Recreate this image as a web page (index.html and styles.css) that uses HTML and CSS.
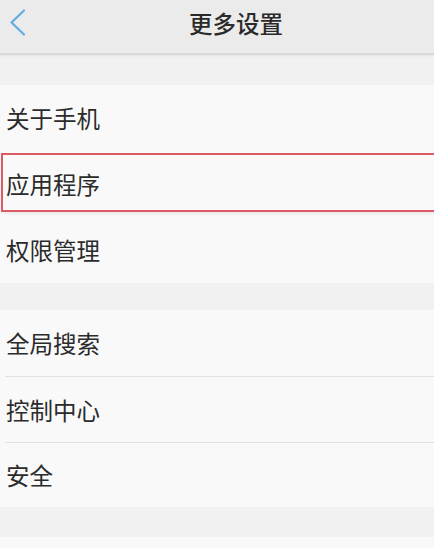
FILE: index.html
```html
<!DOCTYPE html>
<html lang="zh-CN">
<head>
    <meta charset="UTF-8">
    <title>更多设置</title>
    <link rel="stylesheet" href="styles.css">
</head>
<body>
    <div class="header">
        <a class="back" href="#">
            <svg width="20" height="30" viewBox="0 0 20 30"><path d="M15 2.5 L2.5 14.5 L15 26.5" fill="none" stroke="#62ace2" stroke-width="2.2" stroke-linecap="round" stroke-linejoin="round"/></svg>
        </a>
        <h1>更多设置</h1>
    </div>

    <div class="gap"></div>
    <div class="group">
        <div class="row">关于手机</div>
        <div class="row marked">应用程序</div>
        <div class="row">权限管理</div>
    </div>

    <div class="gap short"></div>
    <div class="group lined">
        <div class="row">全局搜索</div>
        <div class="row">控制中心</div>
        <div class="row">安全</div>
    </div>

    <div class="gap"></div>
    <div class="group">
        <div class="row tail"></div>
    </div>
</body>
</html>
```

FILE: styles.css
```css
html, body { height: 548px; overflow: hidden; }
body { margin: 0; background-color: #f1f1f1; font-family: "Noto Sans CJK SC", "Noto Sans", sans-serif; color: #2b2b2b; }
.header {
    height: 53px; display: flex; align-items: center;
    background-color: #ebebeb;
    border-bottom: 2px solid #d9d9d9;
    box-shadow: 0 1px 2px rgba(0,0,0,0.06);
    position: relative;
}
.back { display: flex; padding-left: 9px; margin-top: -8px; }
.header h1 {
    position: absolute; left: 38px; right: 0; top: 0; margin: 0;
    line-height: 46px; text-align: center;
    font-size: 23.5px; font-weight: 500; color: #2a2a2a;
}
.gap { height: 30px; background-color: #f1f1f1; }
.gap.short { height: 27px; }
.group { background-color: #f9f9f9; }
.row {
    height: 66px; display: flex; align-items: center;
    padding-left: 6px; font-size: 23.5px;
    box-sizing: border-box; position: relative;
}
.lined .row:last-child { height: 65px; }
.lined .row + .row { border-top: 1px solid #e1e1e1; margin-left: 5px; padding-left: 1px; }
.marked::after {
    content: ""; position: absolute;
    top: 2px; bottom: 5px; left: 1px; right: -3px;
    border: 2px solid #dc5a66;
    box-shadow: 0 2px 3px rgba(0,0,0,0.06);
}
.row.tail { height: 20px; }
```
